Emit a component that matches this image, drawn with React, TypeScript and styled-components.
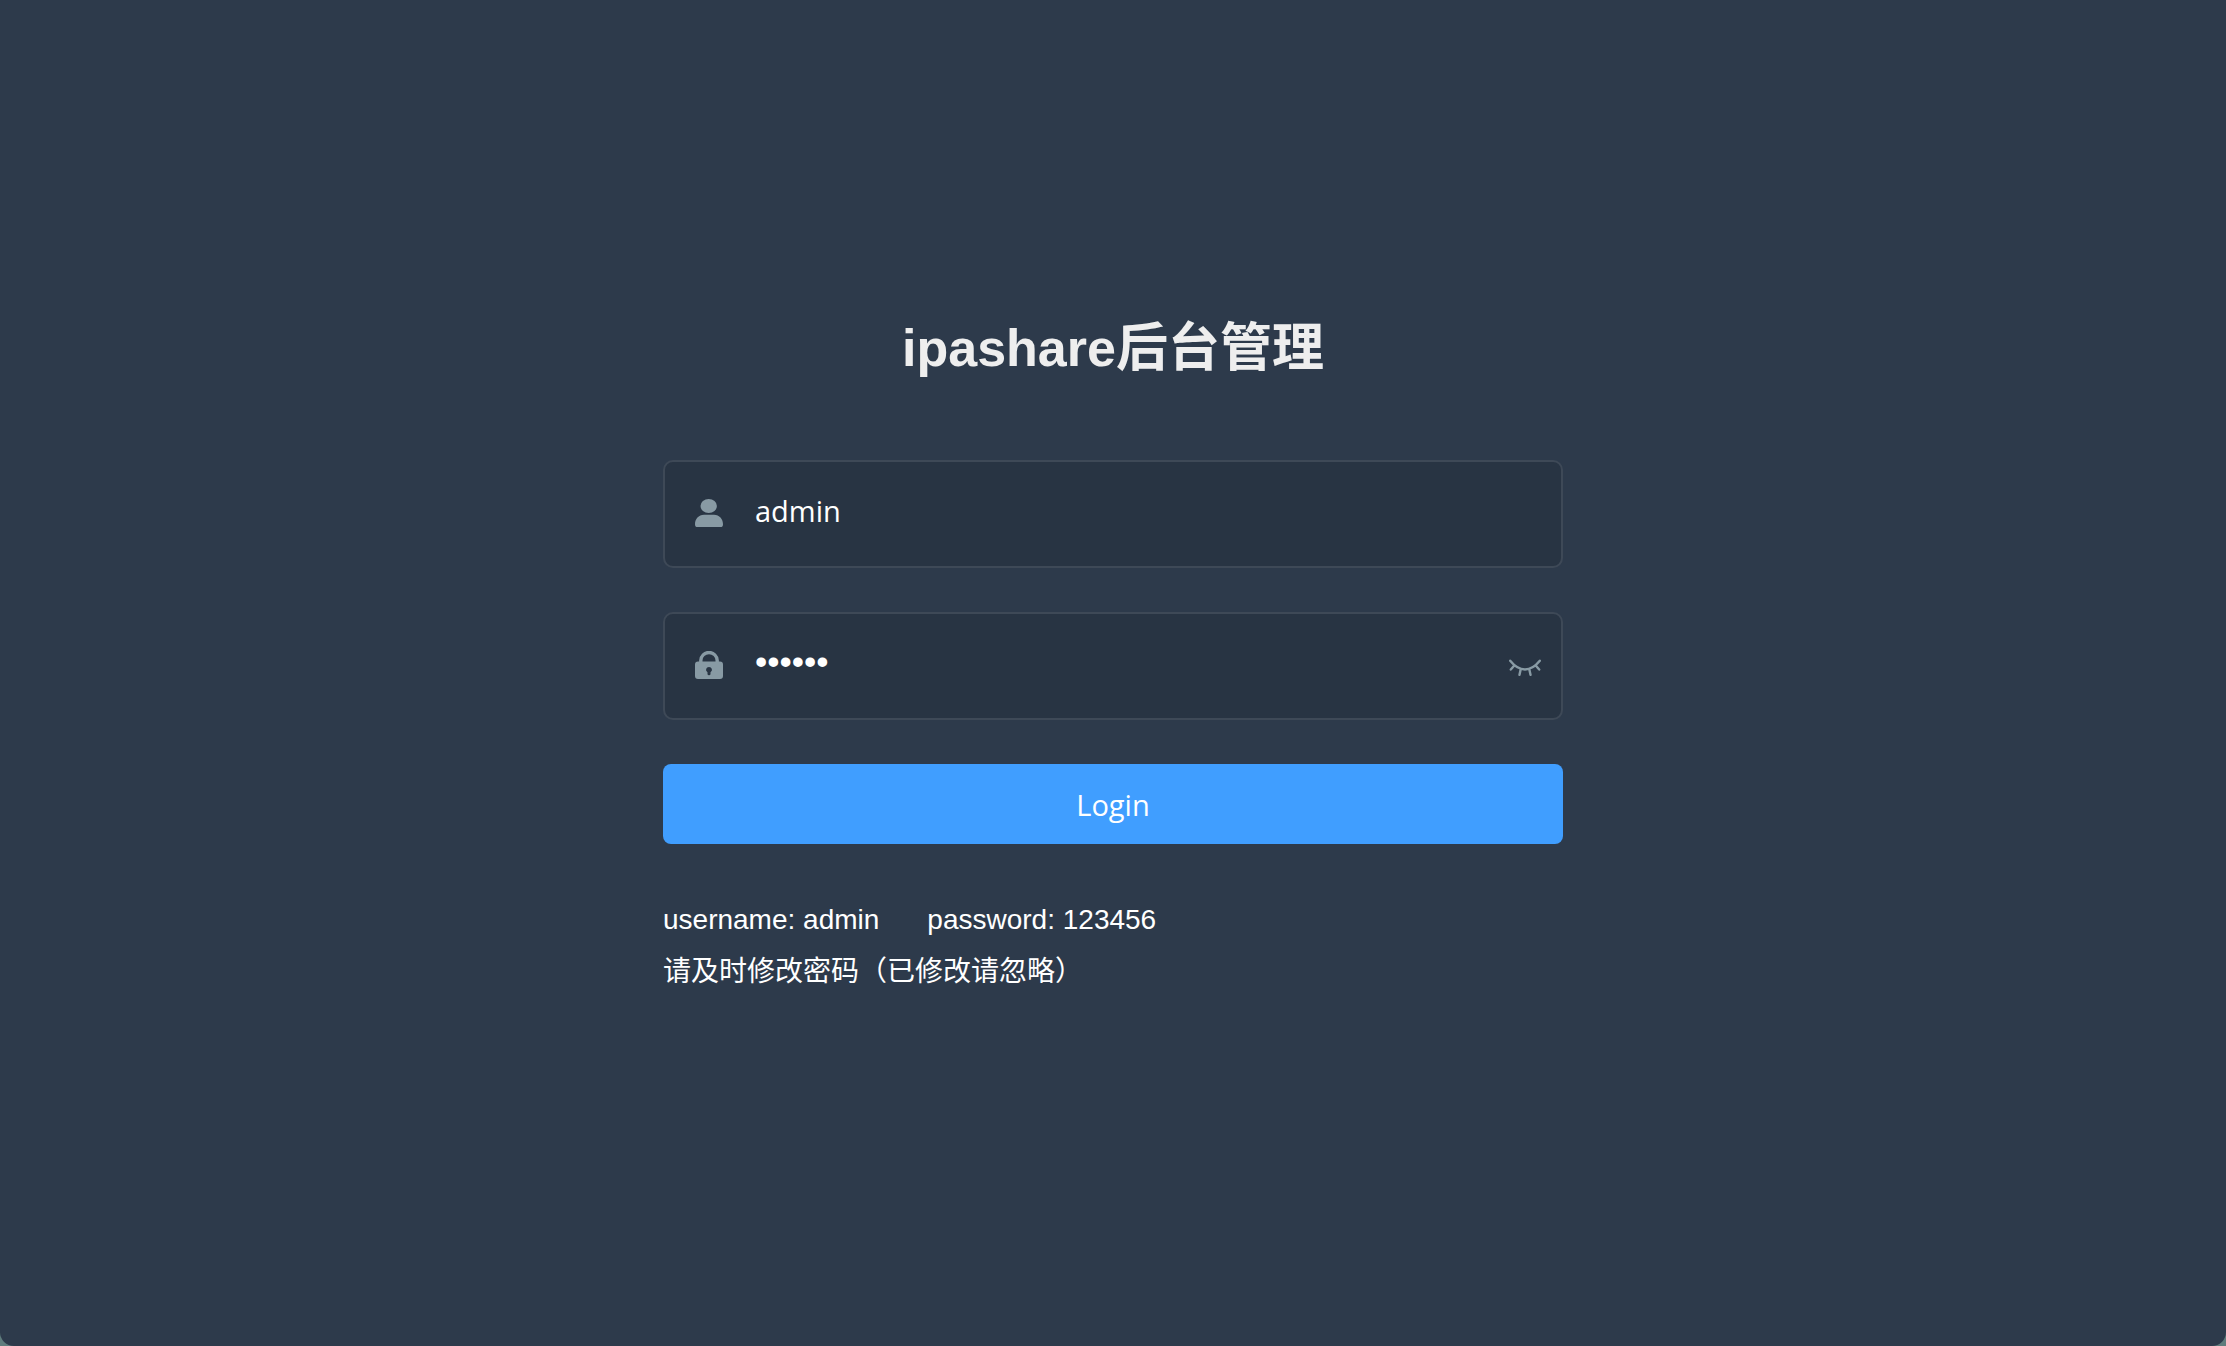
import React, { useState } from "react";
import styled, { createGlobalStyle } from "styled-components";

const GlobalStyle = createGlobalStyle`
  * { box-sizing: border-box; }
  html { background: #5f7c7d; }
  body { margin: 0; }
`;

const Page = styled.main`
  min-height: 100vh;
  padding: 318px 40px 0;
  background: #2d3a4b;
  border-radius: 0 0 14px 14px;
  color: #fff;
  font-family: "Liberation Sans", Arial, "Noto Sans CJK SC", sans-serif;
`;

const LoginForm = styled.form`
  display: flex;
  flex-direction: column;
  gap: 44px;
  max-width: 900px;
  margin: 0 auto;
`;

const Title = styled.h1`
  margin: 0 0 38px;
  color: #eee;
  font-size: 52px;
  line-height: 60px;
  font-weight: 700;
  text-align: center;
`;

const Field = styled.div`
  display: flex;
  align-items: center;
  height: 108px;
  padding: 0 19px 2px 30px;
  border: 2px solid #3e4957;
  border-radius: 10px;
  background: #283443;
  color: #889aa4;
`;

const FieldLabel = styled.label`
  display: flex;
  flex: none;
`;

const TextInput = styled.input`
  flex: 1;
  min-width: 0;
  height: 92px;
  margin-left: 22px;
  padding: 0 10px 6px;
  border: 0;
  outline: 0;
  background: transparent;
  color: #fff;
  font-family: "Open Sans", "Noto Sans", sans-serif;
  font-size: 29px;

  &[type="password"] {
    font-family: "Liberation Sans", Arial, sans-serif;
    font-size: 35px;
  }
`;

const FieldIcon = styled.svg`
  width: 28px;
  height: 28px;
`;

const EyeButton = styled.button`
  display: flex;
  padding: 0;
  border: 0;
  background: transparent;
  color: inherit;
  cursor: pointer;
`;

const EyeIcon = styled.svg`
  width: 34px;
  height: 26px;
`;

const SubmitButton = styled.button`
  height: 80px;
  border: 0;
  border-radius: 8px;
  background: #409eff;
  color: #fff;
  font-family: "Open Sans", "Noto Sans", sans-serif;
  font-size: 29px;
  cursor: pointer;
`;

const Tips = styled.div`
  margin-top: 6px;
  font-size: 28px;
  line-height: 52px;
`;

const TipRow = styled.div`
  display: flex;
  gap: 48px;
`;

export default function App() {
  const [username, setUsername] = useState("admin");
  const [password, setPassword] = useState("123456");
  const [visible, setVisible] = useState(false);

  return (
    <>
      <GlobalStyle />
      <Page>
        <LoginForm onSubmit={(e) => e.preventDefault()}>
          <Title>ipashare后台管理</Title>
          <Field>
            <FieldLabel htmlFor="username" aria-label="Username">
              <FieldIcon viewBox="0 0 28 28" fill="currentColor" aria-hidden="true">
                <ellipse cx="13.7" cy="7" rx="8.2" ry="7" />
                <path d="M9 15.8h10c5.4 0 9 4.4 9 9.4 0 2-.8 2.8-2.7 2.8H2.7C.8 28 0 27.2 0 25.2c0-5 3.6-9.4 9-9.4z" />
              </FieldIcon>
            </FieldLabel>
            <TextInput
              id="username"
              type="text"
              aria-label="Username"
              value={username}
              onChange={(e) => setUsername(e.target.value)}
            />
          </Field>
          <Field>
            <FieldLabel htmlFor="password" aria-label="Password">
              <FieldIcon viewBox="0 0 28 28" aria-hidden="true">
                <path d="M5.8 12V9.5a8.2 8 0 0 1 16.4 0V12" fill="none" stroke="currentColor" strokeWidth="3.4" />
                <path
                  fill="currentColor"
                  fillRule="evenodd"
                  d="M3 10.6h22a3 3 0 0 1 3 3V25a3 3 0 0 1-3 3H3a3 3 0 0 1-3-3V13.6a3 3 0 0 1 3-3zM14 16a3 2.8 0 0 0-1.500 5.200V23a1.500 1.300 0 0 0 3 0v-1.800A3 2.800 0 0 0 14 16z"
                />
              </FieldIcon>
            </FieldLabel>
            <TextInput
              id="password"
              type={visible ? "text" : "password"}
              aria-label="Password"
              value={password}
              onChange={(e) => setPassword(e.target.value)}
            />
            <EyeButton type="button" aria-label="Toggle password visibility" onClick={() => setVisible(!visible)}>
              <EyeIcon viewBox="0 -6 34 26" fill="none" stroke="currentColor" strokeWidth="2.4" strokeLinecap="round" aria-hidden="true">
                <path d="M2.200 2.800C6 7.500 11 11.500 17 11.500S28 7.500 31.800 2.800M6.300 7.500L2.800 11.500M27.700 7.500l3.500 4M12.700 11.200l-1.200 5.600M21.300 11.200l1.200 5.600" />
              </EyeIcon>
            </EyeButton>
          </Field>
          <SubmitButton type="submit">Login</SubmitButton>
          <Tips>
            <TipRow>
              <span>username: admin</span>
              <span>password: 123456</span>
            </TipRow>
            <TipRow>请及时修改密码（已修改请忽略）</TipRow>
          </Tips>
        </LoginForm>
      </Page>
    </>
  );
}
